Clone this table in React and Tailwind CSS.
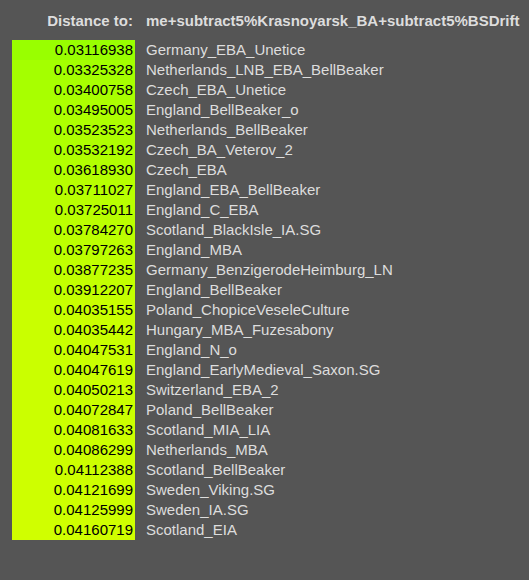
import React from 'react'

const rows = [
    ['0.03116938', 'Germany_EBA_Unetice'],
    ['0.03325328', 'Netherlands_LNB_EBA_BellBeaker'],
    ['0.03400758', 'Czech_EBA_Unetice'],
    ['0.03495005', 'England_BellBeaker_o'],
    ['0.03523523', 'Netherlands_BellBeaker'],
    ['0.03532192', 'Czech_BA_Veterov_2'],
    ['0.03618930', 'Czech_EBA'],
    ['0.03711027', 'England_EBA_BellBeaker'],
    ['0.03725011', 'England_C_EBA'],
    ['0.03784270', 'Scotland_BlackIsle_IA.SG'],
    ['0.03797263', 'England_MBA'],
    ['0.03877235', 'Germany_BenzigerodeHeimburg_LN'],
    ['0.03912207', 'England_BellBeaker'],
    ['0.04035155', 'Poland_ChopiceVeseleCulture'],
    ['0.04035442', 'Hungary_MBA_Fuzesabony'],
    ['0.04047531', 'England_N_o'],
    ['0.04047619', 'England_EarlyMedieval_Saxon.SG'],
    ['0.04050213', 'Switzerland_EBA_2'],
    ['0.04072847', 'Poland_BellBeaker'],
    ['0.04081633', 'Scotland_MIA_LIA'],
    ['0.04086299', 'Netherlands_MBA'],
    ['0.04112388', 'Scotland_BellBeaker'],
    ['0.04121699', 'Sweden_Viking.SG'],
    ['0.04125999', 'Sweden_IA.SG'],
    ['0.04160719', 'Scotland_EIA'],
]

const min = 0.03116938
const max = 0.04160719

// red channel goes from 0x99 to 0xd0 with distance
const cellColor = (d) => {
    const r = Math.round(153 + ((parseFloat(d) - min) / (max - min)) * 55)
    return `rgb(${r}, 255, 0)`
}

const App = () => {
    return (
        <div
            className="w-[529px] h-[580px] bg-[#555555] text-[#dddddd] text-[15px] leading-[20px] pl-3"
            style={{ fontFamily: '"Liberation Sans", Arial, sans-serif' }}
        >
            {/* Header */}
            <div className="flex pt-[11px] pb-[9px] font-bold">
                <div className="w-[123px] text-right pr-[2px]">Distance to:</div>
                <div className="pl-[11px] whitespace-nowrap">me+subtract5%Krasnoyarsk_BA+subtract5%BSDrift</div>
            </div>

            {/* Rows */}
            {rows.map(([dist, name]) => (
                <div key={name} className="flex h-[20px]">
                    <div
                        className="w-[123px] text-right pr-[2px] text-black"
                        style={{ backgroundColor: cellColor(dist) }}
                    >
                        {dist}
                    </div>
                    <div className="pl-[11px] whitespace-nowrap">{name}</div>
                </div>
            ))}
        </div>
    )
}

export default App
